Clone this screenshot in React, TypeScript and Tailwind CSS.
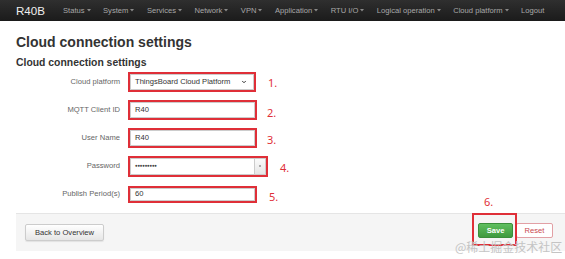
import { ChevronDown } from "lucide-react";

const menu = [
  { label: "Status", caret: true },
  { label: "System", caret: true },
  { label: "Services", caret: true },
  { label: "Network", caret: true },
  { label: "VPN", caret: true },
  { label: "Application", caret: true },
  { label: "RTU I/O", caret: true },
  { label: "Logical operation", caret: true },
  { label: "Cloud platform", caret: true },
  { label: "Logout", caret: false },
];

const Caret = () => (
  <svg width="4" height="3" viewBox="0 0 4 3" className="ml-[2px]">
    <path d="M0 0 L4 0 L2 2.5 Z" fill="#8a8a8a" />
  </svg>
);

const Mark = ({ n, className }: { n: string; className?: string }) => (
  <span
    className={`text-[11px] leading-none text-[#df2f38] ${className ?? ""}`}
    style={{ fontFamily: '"Noto Sans", sans-serif' }}
  >
    {n}
  </span>
);

type RowProps = {
  label: string;
  children: React.ReactNode;
};

const Row = ({ label, children }: RowProps) => (
  <div className="flex items-center h-[20px]">
    <label className="w-[105px] pr-[1px] text-right text-[7.6px] text-[#666]">
      {label}
    </label>
    <div className="ml-[7px] flex items-center">{children}</div>
  </div>
);

const App = () => {
  return (
    <div
      className="w-[565px] h-[259px] bg-white overflow-hidden relative"
      style={{ fontFamily: '"Liberation Sans", Arial, sans-serif' }}
    >
      {/* navbar */}
      <div className="h-[21px] bg-gradient-to-b from-[#2f2f2f] to-[#1b1b1b] flex items-center pl-[16px]">
        <span className="text-[11.6px] text-[#eeeeee] leading-none">R40B</span>
        <ul className="flex items-center gap-[12.5px] ml-[18px]">
          {menu.map((m) => (
            <li
              key={m.label}
              className="flex items-center text-[7.6px] text-[#a8a8a8] leading-none whitespace-nowrap"
            >
              {m.label}
              {m.caret && <Caret />}
            </li>
          ))}
        </ul>
      </div>

      <div className="pl-[16px]">
        <h1 className="mt-[11px] text-[14px] leading-[20px] font-bold text-[#333]">
          Cloud connection settings
        </h1>
        <h2 className="mt-[4px] text-[10.4px] leading-[14px] font-bold text-[#333]">
          Cloud connection settings
        </h2>

        <div className="mt-[2px] flex flex-col gap-[8px]">
          <Row label="Cloud platform">
            <div className="w-[128px] h-[20px] border-2 border-[#df2f38] bg-white flex items-center">
              <div className="flex-1 h-full border border-[#ccc] flex items-center justify-between pl-[4px] pr-[6px] text-[7.6px] text-[#333]">
                ThingsBoard Cloud Platform
                <ChevronDown size={6} strokeWidth={4} color="#333" />
              </div>
            </div>
            <Mark n="1." className="ml-[12px] mt-[1px]" />
          </Row>
          <Row label="MQTT Client ID">
            <div className="w-[129px] h-[20px] border-2 border-[#df2f38] bg-white">
              <div className="h-full border border-[#ccc] flex items-center pl-[4px] text-[7.6px] text-[#333]">
                R40
              </div>
            </div>
            <Mark n="2." className="ml-[10px] mt-[4px]" />
          </Row>
          <Row label="User Name">
            <div className="w-[129px] h-[20px] border-2 border-[#df2f38] bg-white">
              <div className="h-full border border-[#ccc] flex items-center pl-[4px] text-[7.6px] text-[#333]">
                R40
              </div>
            </div>
            <Mark n="3." className="ml-[10px] mt-[3px]" />
          </Row>
          <Row label="Password">
            <div className="w-[140px] h-[21px] border-2 border-[#df2f38] bg-white">
              <div className="h-full border border-[#ccc] flex items-center text-[7.6px] text-[#333]">
                <span className="flex-1 pl-[4px] tracking-[-0.3px] text-[4.5px] text-[#444]">
                  ●●●●●●●●●
                </span>
                <div className="w-[11px] h-full bg-gradient-to-b from-[#fafafa] to-[#e6e6e6] border-l border-[#ccc] flex items-center justify-center">
                  <span className="block w-[2px] h-[2px] bg-[#aaa]" />
                </div>
              </div>
            </div>
            <Mark n="4." className="ml-[12px] mt-[3px]" />
          </Row>
          <Row label="Publish Period(s)">
            <div className="w-[129px] h-[17px] border-2 border-[#df2f38] bg-white">
              <div className="h-full border border-[#ccc] flex items-center pl-[4px] text-[7.6px] text-[#333]">
                60
              </div>
            </div>
            <Mark n="5." className="ml-[12px] mt-[4px]" />
          </Row>
        </div>

        {/* footer actions */}
        <div className="mt-[9px] h-[38px] bg-[#f5f5f5] border-t border-[#e5e5e5] flex items-center justify-between pl-[9px] pr-[12px]">
          <button className="h-[17px] px-[9px] text-[7.6px] text-[#333] bg-gradient-to-b from-white to-[#e6e6e6] border border-[#ccc] rounded-[2px] shadow-[0_1px_1px_rgba(0,0,0,0.08)]">
            Back to Overview
          </button>
          <div className="flex items-center gap-[3px] -mt-[4px]">
            <button className="w-[35px] h-[15px] text-[7.6px] font-bold text-white bg-gradient-to-b from-[#5fbf5f] to-[#3f9a3f] border border-[#3b8e3b] rounded-[2px]">
              Save
            </button>
            <button className="w-[37px] h-[15px] text-[7.6px] text-[#c9474f] bg-white border border-[#e2a0a5] rounded-[2px]">
              Reset
            </button>
          </div>
        </div>
      </div>

      {/* annotation 6 */}
      <Mark n="6." className="absolute left-[484px] top-[196px]" />
      <div className="absolute left-[472px] top-[213px] w-[45px] h-[33px] border-2 border-[#df2f38]" />

      {/* watermark */}
      <span
        className="absolute left-[455px] top-[241px] text-[12px] leading-none text-[#c4c4c4]"
        style={{ fontFamily: '"Noto Sans CJK SC", "Noto Sans", sans-serif' }}
      >
        @稀土掘金技术社区
      </span>
    </div>
  );
};

export default App;
